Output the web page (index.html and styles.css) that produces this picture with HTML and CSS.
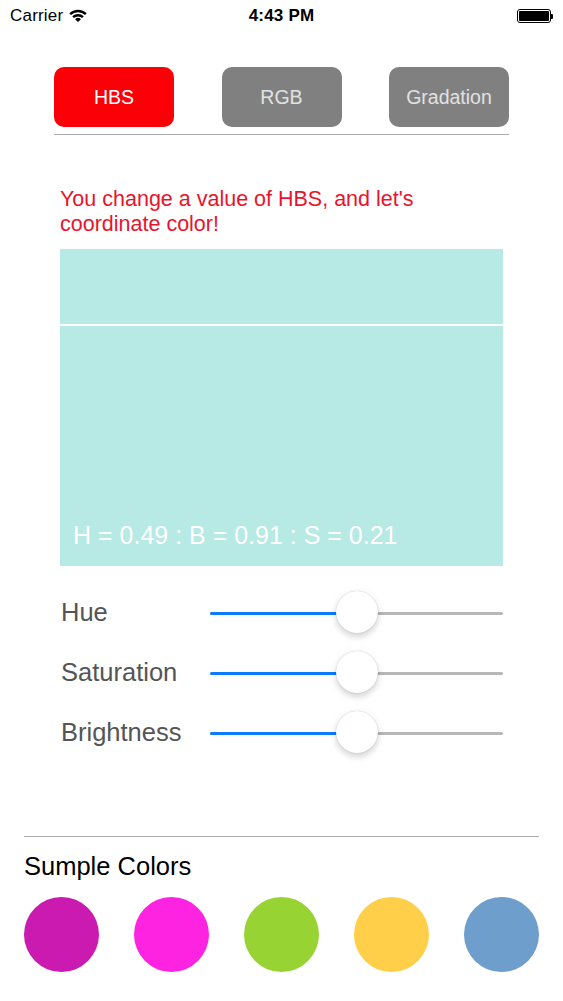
FILE: index.html
```html
<!DOCTYPE html>
<html>
<head>
<meta charset="utf-8">
<link rel="stylesheet" href="styles.css">
</head>
<body>
<div class="screen">
  <div class="status">
    <div class="status-left">
      <span class="carrier">Carrier</span>
      <svg class="wifi" width="18" height="13" viewBox="0 0 18 13">
        <path d="M0.3 4.3 A12.5 12.5 0 0 1 17.7 4.3 L16 6.1 A10 10 0 0 0 2 6.1 Z" fill="#000"/>
        <path d="M3.2 7.3 A8.4 8.4 0 0 1 14.8 7.3 L13.1 9.1 A6 6 0 0 0 4.9 9.1 Z" fill="#000"/>
        <path d="M6.1 10.2 A4.2 4.2 0 0 1 11.9 10.2 L9 13 Z" fill="#000"/>
      </svg>
    </div>
    <div class="time">4:43 PM</div>
    <div class="status-right">
      <div class="battery"><div class="battery-fill"></div></div>
      <div class="battery-nub"></div>
    </div>
  </div>

  <div class="tabs">
    <div class="tab tab-active">HBS</div>
    <div class="tab">RGB</div>
    <div class="tab">Gradation</div>
  </div>

  <p class="message">You change a value of HBS, and let's coordinate color!</p>

  <div class="preview">
    <div class="preview-top"></div>
    <div class="preview-bottom">
      <span class="preview-value">H = 0.49 : B = 0.91 : S = 0.21</span>
    </div>
  </div>

  <div class="sliders">
    <div class="slider-row">
      <span class="slider-label">Hue</span>
      <div class="slider">
        <div class="track-min" style="width:50%"></div>
        <div class="track-max"></div>
        <div class="thumb" style="left:50%"></div>
      </div>
    </div>
    <div class="slider-row">
      <span class="slider-label">Saturation</span>
      <div class="slider">
        <div class="track-min" style="width:50%"></div>
        <div class="track-max"></div>
        <div class="thumb" style="left:50%"></div>
      </div>
    </div>
    <div class="slider-row">
      <span class="slider-label">Brightness</span>
      <div class="slider">
        <div class="track-min" style="width:50%"></div>
        <div class="track-max"></div>
        <div class="thumb" style="left:50%"></div>
      </div>
    </div>
  </div>

  <div class="divider"></div>

  <div class="samples-title">Sumple Colors</div>
  <div class="samples">
    <div class="swatch swatch-1"></div>
    <div class="swatch swatch-2"></div>
    <div class="swatch swatch-3"></div>
    <div class="swatch swatch-4"></div>
    <div class="swatch swatch-5"></div>
  </div>
</div>
</body>
</html>
```

FILE: styles.css
```css
html, body {
  margin: 0;
  padding: 0;
  background: #ffffff;
}

.screen {
  width: 563px;
  height: 1001px;
  overflow: hidden;
  font-family: "Liberation Sans", Arial, sans-serif;
  color: #000;
}

/* status bar */
.status {
  height: 32px;
  display: flex;
  align-items: center;
  justify-content: space-between;
  padding: 0 10px;
}
.status-left {
  display: flex;
  align-items: center;
  gap: 6px;
  width: 120px;
}
.carrier {
  font-size: 17px;
  letter-spacing: 0.2px;
}
.wifi {
  display: block;
  margin-top: -1px;
}
.time {
  font-size: 17px;
  font-weight: bold;
  letter-spacing: 0.2px;
}
.status-right {
  width: 120px;
  display: flex;
  justify-content: flex-end;
  align-items: center;
}
.battery {
  width: 30px;
  height: 10px;
  border: 1.5px solid #000;
  border-radius: 3px;
  padding: 1px;
  box-sizing: content-box;
  display: flex;
}
.battery-fill {
  flex: 1;
  background: #000;
  border-radius: 1px;
}
.battery-nub {
  width: 2px;
  height: 5px;
  background: #000;
  border-radius: 0 1px 1px 0;
}

/* tabs */
.tabs {
  margin: 35px 54px 0 54px;
  padding-bottom: 7px;
  border-bottom: 1px solid #ababab;
  display: flex;
  justify-content: space-between;
}
.tab {
  width: 120px;
  height: 60px;
  border-radius: 10px;
  background: #808080;
  color: #e2e2e2;
  font-size: 19.5px;
  display: flex;
  align-items: center;
  justify-content: center;
}
.tab-active {
  background: #fb0006;
  color: #ffffff;
}

/* message */
.message {
  margin: 52px 60px 0 60px;
  width: 443px;
  font-size: 21.5px;
  line-height: 25px;
  color: #e8142d;
}

/* preview */
.preview {
  margin: 12px 0 0 60px;
  width: 443px;
  background: #b7e9e5;
}
.preview-top {
  height: 75px;
  border-bottom: 2px solid #ffffff;
}
.preview-bottom {
  height: 240px;
  display: flex;
  align-items: flex-end;
  padding: 0 13px 16px 13px;
  box-sizing: border-box;
}
.preview-value {
  color: #ffffff;
  font-size: 25px;
  line-height: 30px;
}

/* sliders */
.sliders {
  margin: 16px 60px 0 61px;
  display: flex;
  flex-direction: column;
}
.slider-row {
  height: 60px;
  display: flex;
  align-items: center;
}
.slider-label {
  width: 149px;
  font-size: 25.5px;
  color: #555555;
}
.slider {
  flex: 1;
  height: 3px;
  margin-top: 2px;
  position: relative;
  display: flex;
}
.track-min {
  height: 3px;
  background: #0a7aff;
  border-radius: 1.5px 0 0 1.5px;
}
.track-max {
  flex: 1;
  height: 3px;
  background: #b7b7b7;
  border-radius: 0 1.5px 1.5px 0;
}
.thumb {
  position: absolute;
  top: 50%;
  width: 42px;
  height: 42px;
  margin: -22px 0 0 -21px;
  border-radius: 50%;
  background: #ffffff;
  box-shadow: 0 0 1px rgba(0, 0, 0, 0.25), 0 4px 6px rgba(0, 0, 0, 0.15), 0 0 12px rgba(0, 0, 0, 0.04);
}

/* samples */
.divider {
  margin: 74px 24px 0 24px;
  height: 1px;
  background: #ababab;
}
.samples-title {
  margin: 14px 24px 0 24px;
  font-size: 25.5px;
  line-height: 30px;
  color: #000;
}
.samples {
  margin: 16px 24px 0 24px;
  display: flex;
  justify-content: space-between;
}
.swatch {
  width: 75px;
  height: 75px;
  border-radius: 50%;
}
.swatch-1 { background: #ca1aaf; }
.swatch-2 { background: #fe23e1; }
.swatch-3 { background: #96d333; }
.swatch-4 { background: #ffcf4a; }
.swatch-5 { background: #6e9ecb; }
```
